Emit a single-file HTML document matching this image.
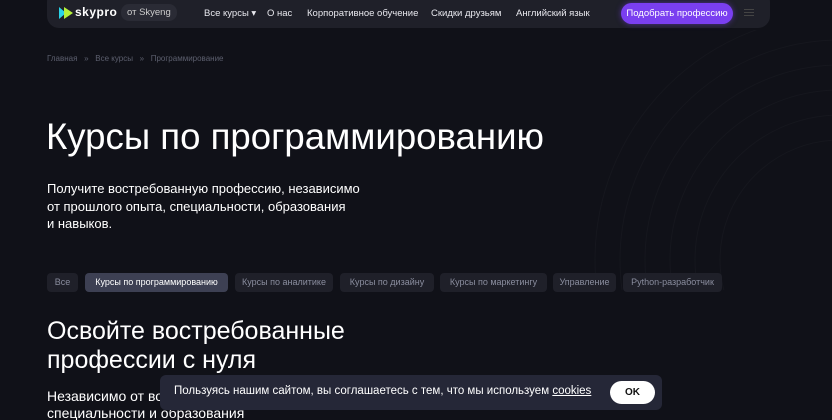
<!DOCTYPE html><html><head><meta charset="utf-8"><style>
body{margin:0;width:832px;height:420px;overflow:hidden;background:#101118;font-family:"Liberation Sans",sans-serif;color:#fff;position:relative}
.a{position:absolute;white-space:nowrap}
.nav{position:absolute;left:47px;top:-10px;width:723px;height:38px;background:#1f2029;border-radius:12px}
.t{font-size:9.5px;color:#e8e8ee}
.tab{position:absolute;top:273px;height:19px;line-height:19px;font-size:9px;color:#8a8d9e;background:#1f2029;border-radius:4px;text-align:center;white-space:nowrap;overflow:hidden}
</style></head><body>
<svg class="a" style="left:360px;top:30px" width="472" height="260"><g fill="none" stroke="#16171e" stroke-width="1">
<circle cx="480" cy="230" r="120"/><circle cx="480" cy="230" r="145"/><circle cx="480" cy="230" r="170"/><circle cx="480" cy="230" r="195"/><circle cx="480" cy="230" r="220"/><circle cx="480" cy="230" r="245"/></g></svg>
<div class="nav"></div>
<svg class="a" style="left:59px;top:7px" width="14" height="12"><polygon points="0,0 7,6 0,12" fill="#2ad4e8"/><polygon points="5,0 14,6 5,12" fill="#b6f23a"/></svg>
<div class="a" style="left:75px;top:5px;font-size:12px;font-weight:bold;letter-spacing:0.5px">skypro</div>
<div class="a" style="left:121px;top:4px;height:17px;line-height:17px;padding:0 6px;border-radius:8px;background:#2a2b35;font-size:9.5px;color:#ccc">от Skyeng</div>
<div class="a t" style="left:204px;top:8px">Все курсы ▾</div>
<div class="a t" style="left:267px;top:8px">О нас</div>
<div class="a t" style="left:307px;top:8px">Корпоративное обучение</div>
<div class="a t" style="left:431px;top:8px">Скидки друзьям</div>
<div class="a t" style="left:516px;top:8px">Английский язык</div>
<div class="a" style="left:621px;top:3px;width:112px;height:21px;line-height:21px;text-align:center;border-radius:11px;background:#7a3ff0;font-size:9.5px;box-shadow:0 0 6px #7a3ff088">Подобрать профессию</div>
<div class="a" style="left:744px;top:9px;width:10px;height:1px;background:#444;box-shadow:0 3px 0 #444,0 6px 0 #444"></div>
<div class="a" style="left:47px;top:54px;font-size:8px;color:#5c5f6e">Главная &nbsp; » &nbsp; Все курсы &nbsp; » &nbsp; Программирование</div>
<div class="a" style="left:46px;top:116px;font-size:36.6px">Курсы по программированию</div>
<div class="a" style="left:47px;top:180px;font-size:13px;line-height:17.5px">Получите востребованную профессию, независимо<br>от прошлого опыта, специальности, образования<br>и навыков.</div>
<div class="tab" style="left:47px;width:31px">Все</div>
<div class="tab" style="left:85px;background:#3d4053;color:#fff;width:143px">Курсы по программированию</div>
<div class="tab" style="left:235px;width:98px">Курсы по аналитике</div>
<div class="tab" style="left:340px;width:94px">Курсы по дизайну</div>
<div class="tab" style="left:440px;width:107px">Курсы по маркетингу</div>
<div class="tab" style="left:553px;width:63px">Управление</div>
<div class="tab" style="left:623px;width:99px">Python-разработчик</div>
<div class="a" style="left:47px;top:317px;font-size:25px;line-height:29px">Освойте востребованные<br>профессии с нуля</div>
<div class="a" style="left:47px;top:388px;font-size:14px;line-height:17px;height:32px;overflow:hidden">Независимо от возможностей<br>специальности и образования</div>
<div class="a" style="left:160px;top:375px;width:502px;height:35px;background:#252737;border-radius:6px"></div>
<div class="a" style="left:174px;top:385px;font-size:11.5px">Пользуясь нашим сайтом, вы соглашаетесь с тем, что мы используем <u>cookies</u></div>
<div class="a" style="left:610px;top:381px;width:45px;height:23px;line-height:23px;text-align:center;background:#fff;color:#111;border-radius:12px;font-size:10px;font-weight:bold">OK</div>
</body></html>
